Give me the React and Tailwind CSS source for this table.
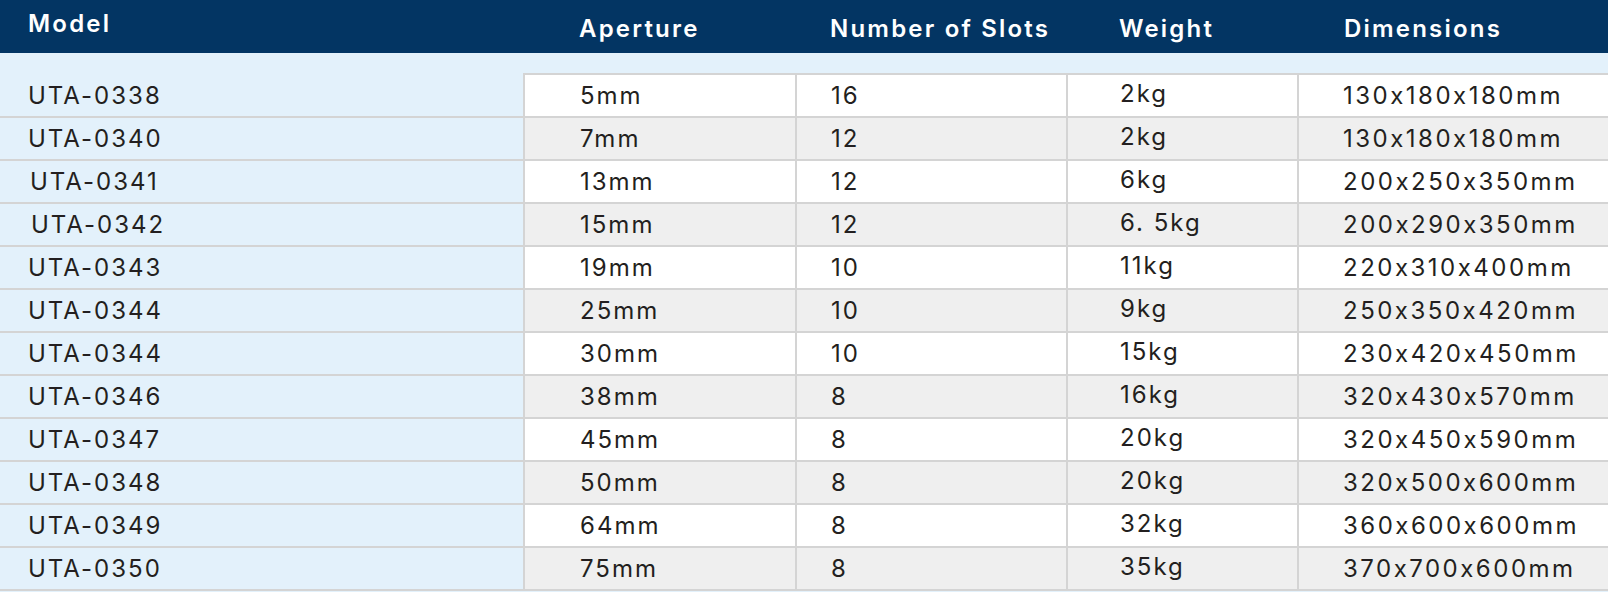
const rows = [
  ['UTA-0338', '5mm', '16', '2kg', '130x180x180mm', 0],
  ['UTA-0340', '7mm', '12', '2kg', '130x180x180mm', 0],
  ['UTA-0341', '13mm', '12', '6kg', '200x250x350mm', 2],
  ['UTA-0342', '15mm', '12', '6. 5kg', '200x290x350mm', 3],
  ['UTA-0343', '19mm', '10', '11kg', '220x310x400mm', 0],
  ['UTA-0344', '25mm', '10', '9kg', '250x350x420mm', 0],
  ['UTA-0344', '30mm', '10', '15kg', '230x420x450mm', 0],
  ['UTA-0346', '38mm', '8', '16kg', '320x430x570mm', 0],
  ['UTA-0347', '45mm', '8', '20kg', '320x450x590mm', 0],
  ['UTA-0348', '50mm', '8', '20kg', '320x500x600mm', 0],
  ['UTA-0349', '64mm', '8', '32kg', '360x600x600mm', 0],
  ['UTA-0350', '75mm', '8', '35kg', '370x700x600mm', 0],
];

const cols = 'grid grid-cols-[523px_272px_271px_231px_1fr]';

export default function App() {
  return (
    <div className="w-[1608px] h-[592px] overflow-hidden bg-[#e3f1fb] text-[#231f20] font-['Inter',sans-serif]">
      <div className={`${cols} h-[53px] bg-[#033563] text-white text-[24px] font-semibold leading-none tracking-[2.2px]`}>
        <div className="pl-[28px] pt-[12px]">Model</div>
        <div className="pl-[56px] pt-[17px]">Aperture</div>
        <div className="pl-[35px] pt-[17px]">Number of Slots</div>
        <div className="pl-[53px] pt-[17px]">Weight</div>
        <div className="pl-[47px] pt-[17px]">Dimensions</div>
      </div>

      <div className="pt-[20px] text-[24px] leading-none tracking-[2px]">
        {rows.map(([model, ap, slots, weight, dims, indent], i) => {
          const bg = i % 2 === 0 ? 'bg-white' : 'bg-[#efefef]';
          const first = i === 0 ? 'border-t-2 h-[45px]' : 'h-[43px]';
          const cell = `flex items-center border-b-2 border-l-2 border-[#d4d4d4] ${first} ${bg}`;
          return (
            <div key={i} className={cols}>
              <div className={`flex items-center border-b-2 border-[#d4d4d4] ${i === 0 ? 'border-t-2 border-t-transparent h-[45px]' : 'h-[43px]'}`}>
                <span style={{ paddingLeft: 28 + indent }}>{model}</span>
              </div>
              <div className={`${cell} pl-[55px]`}>{ap}</div>
              <div className={`${cell} pl-[34px]`}>{slots}</div>
              <div className={`${cell} pl-[52px] pb-[4px]`}>{weight}</div>
              <div className={`${cell} pl-[44px] tracking-[2.5px]`}>{dims}</div>
            </div>
          );
        })}
      </div>
    </div>
  );
}
